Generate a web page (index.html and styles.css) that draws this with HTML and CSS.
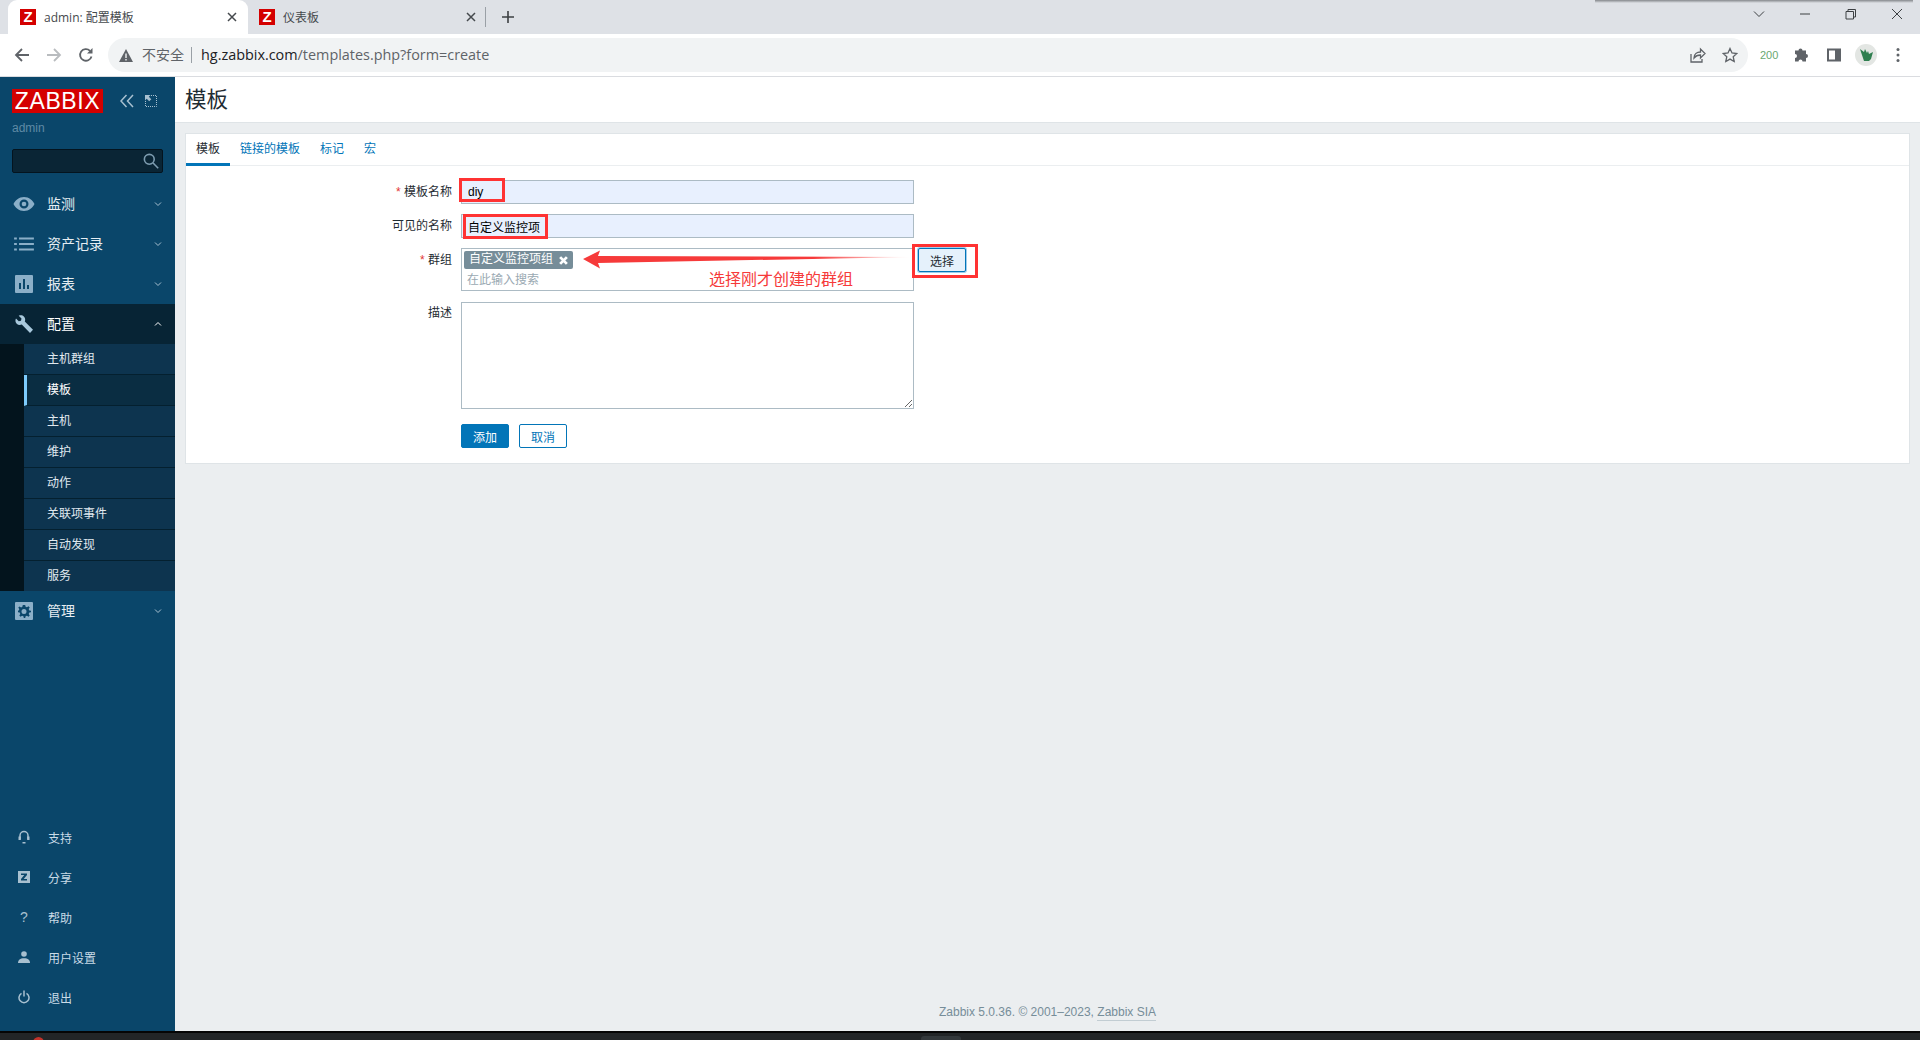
FILE: index.html
```html
<!DOCTYPE html>
<html lang="zh-CN">
<head>
<meta charset="utf-8">
<title>admin: 配置模板</title>
<link rel="stylesheet" href="styles.css">
</head>
<body>
<header class="chrome">
  <div class="tabstrip">
    <div class="tab tab-active">
      <span class="favicon">Z</span><span class="tab-title">admin: 配置模板</span>
      <svg class="tab-x" viewBox="0 0 10 10"><path d="M1 1l8 8M9 1l-8 8"/></svg>
    </div>
    <div class="tab">
      <span class="favicon">Z</span><span class="tab-title">仪表板</span>
      <svg class="tab-x" viewBox="0 0 10 10"><path d="M1 1l8 8M9 1l-8 8"/></svg>
    </div>
    <span class="tab-sep"></span>
    <svg class="tab-plus" viewBox="0 0 12 12"><path d="M6 0v12M0 6h12"/></svg>
    <div class="winctl">
      <svg viewBox="0 0 12 12" class="win"><path d="M1 3.500l5 5 5-5"/></svg>
      <svg viewBox="0 0 12 12" class="win"><path d="M1 6h10"/></svg>
      <svg viewBox="0 0 12 12" class="win"><path d="M1 3.500h7.500v7.500H1zM3 3.500V1.500h7.500V9H8.500"/></svg>
      <svg viewBox="0 0 12 12" class="win"><path d="M1 1l10 10M11 1L1 11"/></svg>
    </div>
  </div>
  <div class="toolbar">
    <svg class="nav-ic" viewBox="0 0 16 16"><path d="M15 8H2.500M8 2L2 8l6 6"/></svg>
    <svg class="nav-ic nav-off" viewBox="0 0 16 16"><path d="M1 8h12.500M8 2l6 6-6 6"/></svg>
    <svg class="nav-ic" viewBox="0 0 16 16"><path d="M13.500 9.500A5.800 5.800 0 1 1 12 3.800"/><path class="solid" d="M14.500 1v5.500H9z"/></svg>
    <div class="omnibox">
      <svg class="warn" viewBox="0 0 14 13"><path d="M7 0l7 13H0z"/><path class="warn-mark" d="M6.300 4.500h1.400v4.500H6.300zM6.300 10h1.400v1.400H6.300z"/></svg>
      <span class="insecure">不安全</span><span class="omni-sep"></span>
      <span class="url"><b>hg.zabbix.com</b>/templates.php?form=create</span>
      <svg class="omni-ic omni-share" viewBox="0 0 16 16"><path d="M1 7v8h11v-3M4 11c0-4 3-6 6.500-6V2L15 6.500 10.500 11V8C8 8 5.500 9 4 11z"/></svg>
      <svg class="omni-ic omni-star" viewBox="0 0 16 16"><path d="M8 1.500l2 4.500 4.800.5-3.600 3.200 1 4.800L8 12.100l-4.200 2.400 1-4.800L1.200 6.500 6 6z"/></svg>
    </div>
    <span class="ext-200">200</span>
    <svg class="tb-ic" viewBox="0 0 16 16"><path class="solid-g" d="M1 5h3.500a2 2 0 1 1 4 0H12v3.500a2 2 0 1 1 0 4V16H8.500a2 2 0 1 0-4 0H1v-3.500a2 2 0 1 0 0-4z" transform="translate(0 -1.500)"/></svg>
    <svg class="tb-ic" viewBox="0 0 16 16"><path class="solid-g" d="M1 1.500h14v13H1zM3 3.500v9h6v-9z" fill-rule="evenodd"/></svg>
    <span class="avatar"><svg viewBox="0 0 22 22"><path class="leaf" d="M5 5l4 3 1-3 2 4 1-2 1 3 4-2-2 7-2 2H9l-2-6z"/></svg></span>
    <svg class="tb-ic tb-dots" viewBox="0 0 16 16"><circle cx="8" cy="2.500" r="1.500"/><circle cx="8" cy="8" r="1.500"/><circle cx="8" cy="13.500" r="1.500"/></svg>
  </div>
</header>

<div class="app">
  <aside class="sidebar">
    <div class="brand">
      <span class="logo">ZABBIX</span>
      <svg class="brand-ic" viewBox="0 0 14 14"><path d="M6.500 1L1 7l5.500 6M13 1L7.500 7l5.500 6"/></svg>
      <svg class="brand-ic brand-ic2" viewBox="0 0 12 12"><path class="dotted" d="M.5 6v5.500h11V.5H6"/><path class="arrow" d="M0 0h5.500L3.800 1.700 6.300 4.200 4.200 6.300 1.700 3.800 0 5.500z"/></svg>
    </div>
    <div class="user">admin</div>
    <div class="search">
      <svg viewBox="0 0 14 14"><circle cx="5.500" cy="5.500" r="4.300"/><path d="M8.800 8.800L13.300 13.300"/></svg>
    </div>
    <nav class="menu">
      <a class="mi">
        <svg class="mi-ic" viewBox="0 0 22 16"><path class="fill" fill-rule="evenodd" d="M11 1C6 1 2 4.500 0.500 8 2 11.500 6 15 11 15s9-3.500 10.500-7C20 4.500 16 1 11 1zM11 3.500a4.500 4.500 0 1 1 0 9 4.500 4.500 0 0 1 0-9z"/><circle class="fill" cx="11" cy="8" r="2.300"/></svg>
        <span>监测</span><svg class="chev" viewBox="0 0 8 6"><path d="M1 1.500l3 3 3-3"/></svg>
      </a>
      <a class="mi">
        <svg class="mi-ic" viewBox="0 0 20 14"><path class="fill" d="M1 1h2.500v2H1zM5.500 1H19v2H5.500zM1 6h2.500v2H1zM5.500 6H19v2H5.500zM1 11h2.500v2H1zM5.500 11H19v2H5.500z"/></svg>
        <span>资产记录</span><svg class="chev" viewBox="0 0 8 6"><path d="M1 1.500l3 3 3-3"/></svg>
      </a>
      <a class="mi">
        <svg class="mi-ic" viewBox="0 0 18 18"><path class="fill" fill-rule="evenodd" d="M1 0h16a1 1 0 0 1 1 1v16a1 1 0 0 1-1 1H1a1 1 0 0 1-1-1V1a1 1 0 0 1 1-1zM4 8v6h2V8zM8 4v10h2V4zM12 10v4h2v-4z"/></svg>
        <span>报表</span><svg class="chev" viewBox="0 0 8 6"><path d="M1 1.500l3 3 3-3"/></svg>
      </a>
      <a class="mi mi-open">
        <svg class="mi-ic" viewBox="0 0 18 18"><path class="fill" d="M1 3.500L3.800 6.300 6 5.800l.5-2.200L3.700.8C5.500 0 7.800.3 9 1.700c1.300 1.400 1.500 3.200.8 4.800L18 14.700 15 18 6.800 9.500C5 10.300 3 10 1.700 8.700.3 7.300 0 5.300 1 3.500z"/></svg>
        <span>配置</span><svg class="chev" viewBox="0 0 8 6"><path d="M1 4.500l3-3 3 3"/></svg>
      </a>
      <ul class="submenu">
        <li>主机群组</li>
        <li class="sub-active">模板</li>
        <li>主机</li>
        <li>维护</li>
        <li>动作</li>
        <li>关联项事件</li>
        <li>自动发现</li>
        <li>服务</li>
      </ul>
      <a class="mi">
        <svg class="mi-ic" viewBox="0 0 18 18"><path class="fill" fill-rule="evenodd" d="M1 0h16a1 1 0 0 1 1 1v16a1 1 0 0 1-1 1H1a1 1 0 0 1-1-1V1a1 1 0 0 1 1-1zM7.800 3l-.4 1.800-1.300.6-1.600-1-1.200 1.200 1 1.600-.6 1.300L3 8.800v1.400l1.700.4.6 1.300-1 1.600 1.200 1.200 1.600-1 1.300.6.400 1.700h1.400l.4-1.700 1.300-.6 1.600 1 1.200-1.200-1-1.600.6-1.300 1.700-.4V8.800l-1.700-.4-.6-1.300 1-1.600-1.200-1.200-1.600 1-1.300-.6L10.200 3zM9 7a2.500 2.500 0 1 1 0 5 2.500 2.500 0 0 1 0-5z"/></svg>
        <span>管理</span><svg class="chev" viewBox="0 0 8 6"><path d="M1 1.500l3 3 3-3"/></svg>
      </a>
    </nav>
    <nav class="menu-bottom">
      <a class="bi"><svg viewBox="0 0 12 14"><path class="line" d="M2 9.500V5.500a4 4 0 0 1 8 0v4"/><path class="fill" d="M.5 6.500h2.300v3.500H.5zM9.200 6.500h2.300v3.500H9.200zM4.500 12h3v1.500h-3z"/></svg><span>支持</span></a>
      <a class="bi"><svg viewBox="0 0 12 12"><path class="fill" fill-rule="evenodd" d="M0 0h12v12H0zM3 2.500v1.500h3.300L3 8v1.500h6V8H5.700L9 4V2.500z"/></svg><span>分享</span></a>
      <a class="bi bi-q"><b>?</b><span>帮助</span></a>
      <a class="bi"><svg viewBox="0 0 12 12"><circle class="fill" cx="6" cy="3" r="2.800"/><path class="fill" d="M0 12c0-3 2-4.800 6-4.800S12 9 12 12z"/></svg><span>用户设置</span></a>
      <a class="bi"><svg viewBox="0 0 12 13"><path class="line" d="M3.500 2.800a5 5 0 1 0 5 0M6 0v6"/></svg><span>退出</span></a>
    </nav>
  </aside>

  <main class="content">
    <div class="page-head"><h1>模板</h1></div>
    <section class="card">
      <div class="tabs">
        <a class="t t-on">模板</a>
        <a class="t">链接的模板</a>
        <a class="t">标记</a>
        <a class="t">宏</a>
      </div>
      <form class="form">
        <label class="lb"><i>*</i> 模板名称</label>
        <input class="inp inp-fill" value="diy">
        <label class="lb">可见的名称</label>
        <input class="inp inp-fill" value="自定义监控项">
        <label class="lb"><i>*</i> 群组</label>
        <div class="msel">
          <span class="tag"><span class="tag-text">自定义监控项组</span><svg viewBox="0 0 8 8"><path d="M1 1l6 6M7 1L1 7"/></svg></span>
          <span class="ph">在此输入搜索</span>
          <button type="button" class="sel-btn">选择</button>
        </div>
        <label class="lb">描述</label>
        <textarea class="ta"></textarea>
        <span></span>
        <div class="btns">
          <button type="button" class="btn btn-main">添加</button>
          <button type="button" class="btn btn-alt">取消</button>
        </div>
      </form>
    </section>
    <footer class="foot">Zabbix 5.0.36. © 2001–2023, <a>Zabbix SIA</a></footer>
  </main>
</div>
<div class="taskbar"><span class="task-thumb"></span></div>

<span class="shadow-top"></span>
<span class="task-dot"></span>
<span class="rb rb1"></span>
<span class="rb rb2"></span>
<span class="rb rb3"></span>
<svg class="arrow-note" viewBox="0 0 330 20">
  <defs><linearGradient id="fade" x1="0" x2="1" y1="0" y2="0"><stop offset="0" stop-color="#f63a3a"/><stop offset=".7" stop-color="#f63a3a"/><stop offset="1" stop-color="#f63a3a" stop-opacity="0"/></linearGradient></defs>
  <path fill="url(#fade)" d="M0 10L17 1.500l-2 5.500 315 1-315 6 2 5.500z"/>
</svg>
<span class="note">选择刚才创建的群组</span>
</body>
</html>
```
FILE: styles.css
```css
* { box-sizing: border-box; }
html, body { margin: 0; padding: 0; }
body {
  width: 1920px; height: 1040px; overflow: hidden; position: relative;
  display: flex; flex-direction: column;
  font: 12px "Liberation Sans", "Noto Sans CJK SC", sans-serif;
  color: #1f2c33; background: #ebeef0;
}
a { text-decoration: none; }
svg { display: block; flex: none; }

/* browser chrome */
.chrome { flex: none; height: 77px; background: #fff; border-bottom: 1px solid #dadce0; }
.tabstrip { height: 34px; background: #dee1e6; display: flex; align-items: stretch; padding-left: 8px; }
.tab { width: 240px; margin-right: -1px; display: flex; align-items: center; padding: 0 11px 0 12px; color: #45494d; }
.tab-active { background: #fff; border-radius: 9px 9px 0 0; }
.favicon {
  width: 16px; height: 16px; background: #d40000; color: #fff; font: bold 15px/16px "Liberation Sans", sans-serif;
  text-align: center; flex: none;
}
.tab-title { margin-left: 8px; flex: 1; font: 12px "Open Sans", "Noto Sans CJK SC", sans-serif; }
.tab-x { width: 10px; height: 10px; fill: none; stroke: #45494d; stroke-width: 1.500; }
.tab-sep { width: 1px; height: 20px; background: #9aa0a6; margin: 7px 0 0 -1px; }
.tab-plus { width: 12px; height: 12px; margin: 11px 0 0 16px; fill: none; stroke: #3c4043; stroke-width: 1.600; }
.winctl { margin-left: auto; display: flex; padding-right: 17px; gap: 34px; padding-top: 8px; }
.win { width: 12px; height: 12px; fill: none; stroke: #3c4043; stroke-width: 1; }
.toolbar { height: 42px; display: flex; align-items: center; padding-left: 14px; }
.nav-ic { width: 16px; height: 16px; margin-right: 16px; fill: none; stroke: #5f6368; stroke-width: 1.800; }
.nav-off { stroke: #b9bcbf; }
.nav-ic .solid { fill: #5f6368; stroke: none; }
.omnibox {
  width: 1640px; height: 34px; border-radius: 17px; background: #f1f3f4;
  display: flex; align-items: center; padding-left: 11px; margin-left: -2px;
}
.warn { width: 14px; height: 13px; fill: #5f6368; }
.warn-mark { fill: #f1f3f4; }
.insecure { margin-left: 9px; font-size: 14px; line-height: 16px; color: #5f6368; width: 42px; white-space: nowrap; }
.omni-sep { width: 1px; height: 16px; background: #9aa0a6; margin: 0 9px 0 7px; }
.url { font: 14.400px/18px "Open Sans", "Noto Sans", sans-serif; color: #5f6368; white-space: nowrap; margin-top: -1px; }
.url b { font-weight: 400; color: #202124; }
.omni-ic { width: 16px; height: 16px; margin-right: 16px; fill: none; stroke: #5f6368; stroke-width: 1.300; }
.omni-share { margin-left: auto; }
.omni-star { margin-right: 10px; }
.ext-200 { width: 20px; margin: 0 14px 0 12px; font-size: 11px; color: #6aa86f; white-space: nowrap; }
.tb-ic { width: 16px; height: 16px; margin-right: 16px; }
.solid-g { fill: #5f6368; }
.avatar { width: 22px; height: 22px; border-radius: 50%; background: #e3e6e3; margin: 0 13px 0 -3px; flex: none; }
.leaf { fill: #2f7f4f; }
.tb-dots { fill: #5f6368; margin: 0; }

/* layout */
.app { flex: 1; display: flex; min-height: 0; }
.sidebar { width: 175px; flex: none; background: #0a466a; display: flex; flex-direction: column; }
.brand { display: flex; align-items: center; padding: 12px 0 0 12px; height: 36px; }
.logo {
  width: 91px; height: 24px; background: #d40000; color: #fff; text-align: center;
  font: 23px/24px "Liberation Sans", sans-serif; letter-spacing: .6px; flex: none;
}
.brand-ic { width: 14px; height: 14px; margin-left: 17px; fill: none; stroke: #a8c0d0; stroke-width: 1.500; }
.brand-ic2 { width: 12px; height: 12px; margin-left: 11px; }
.dotted { stroke-dasharray: 1 1; stroke-width: 1; }
.arrow { fill: #a8c0d0; stroke: none; }
.user { margin: 8px 0 0 12px; height: 14px; line-height: 14px; font-size: 12px; color: #5f8aa5; }
.search {
  margin: 14px 12px 0; height: 24px; background: #0a2535; border: 1px solid #04141f; border-radius: 2px;
  display: flex; align-items: center; justify-content: flex-end; padding-right: 3px;
}
.search svg { width: 16px; height: 16px; fill: none; stroke: #7d9cb0; stroke-width: 1.400; }
.menu { margin-top: 11px; }
.mi { height: 40px; display: flex; align-items: center; color: #e6edf2; font-size: 14px; line-height: 18px; position: relative; }
.mi > span { margin-left: 47px; }
.mi-ic { position: absolute; left: 13px; top: 11px; width: 22px; height: 18px; }
.fill { fill: #8bafc8; }
.chev { width: 8px; height: 6px; margin-left: auto; margin-right: 13px; fill: none; stroke: #a8c0d0; stroke-width: 1; }
.mi-open { background: #072435; color: #fff; }
.mi-open .fill { fill: #a8c8dc; }
.mi-open .chev { stroke: #fff; }
.submenu {
  list-style: none; margin: 0; padding: 0 0 0 24px; background: #03141d;
}
.submenu li {
  height: 31px; padding: 0 0 0 23px; line-height: 31px; background: #0d344f; color: #e0e9ef;
  font-size: 12px; border-bottom: 1px solid #04202f;
}
.submenu li:last-child { height: 30px; border-bottom: 0; }
.submenu .sub-active { background: #0a2d42; border-left: 3px solid #7dcbfc; padding-left: 20px; color: #fff; }
.menu-bottom { margin-top: auto; padding-bottom: 14px; }
.bi { height: 40px; display: flex; align-items: center; color: #c9dbe7; font-size: 12px; padding-left: 18px; }
.bi svg { width: 12px; height: 14px; }
.bi span { margin-left: 18px; }
.line { fill: none; stroke: #a8c0d0; stroke-width: 1.500; }
.bi .fill { fill: #a8c0d0; }
.bi-q b { width: 12px; text-align: center; font: 14px "Liberation Sans", sans-serif; color: #a8c0d0; }

/* content */
.content { flex: 1; min-width: 0; display: flex; flex-direction: column; background: #ebeef0; }
.page-head { height: 46px; background: #fff; border-bottom: 1px solid #dfe4e7; padding-left: 10px; flex: none; }
h1 { margin: 0; font-size: 21.500px; font-weight: 400; line-height: 46px; color: #1f2c33; }
.card { margin: 10px 10px 0 10px; background: #fff; border: 1px solid #dfe4e7; flex: none; }
.tabs { display: flex; height: 32px; border-bottom: 1px solid #ebeef0; }
.t { padding: 0 10px; line-height: 30px; color: #0275b8; font-size: 12px; height: 32px; }
.t-on { color: #1f2c33; border-bottom: 3px solid #0275b8; width: 44px; }
.form {
  display: grid; grid-template-columns: 266px 453px; column-gap: 9px; row-gap: 10px;
  padding: 14px 0 15px 0;
}
.lb { text-align: right; font-size: 12px; line-height: 24px; color: #1f2c33; }
.lb i { color: #e33734; font-style: normal; }
.inp { height: 24px; width: 453px; border: 1px solid #acbbc4; padding: 0 6px; font: 12px "Liberation Sans", "Noto Sans CJK SC", sans-serif; color: #000; outline: 0; }
.inp-fill { background: #e8f0fe; }
.msel { height: 43px; border: 1px solid #acbbc4; position: relative; padding: 2px 0 0 2px; }
.tag {
  display: flex; align-items: center; justify-content: space-between; width: 109px; height: 18px;
  background: #768d99; border-radius: 2px; color: #fff; padding: 0 5px; font-size: 12px;
}
.tag-text { line-height: 16px; margin-top: -2px; }
.tag svg { width: 9px; height: 9px; fill: none; stroke: #fff; stroke-width: 2.500; }
.ph { display: block; margin: 3px 0 0 3px; color: #9aa9b2; font-size: 12px; line-height: 16px; }
.sel-btn {
  position: absolute; left: 456px; top: -1px; width: 48px; height: 24px;
  background: #e5f1fb; border: 1px solid #0275b8; border-radius: 2px; box-shadow: 0 0 0 1px #9fcdec;
  font: 12px "Liberation Sans", "Noto Sans CJK SC", sans-serif; color: #1f2c33; padding: 0;
}
.ta { width: 453px; height: 107px; border: 1px solid #acbbc4; background: #fff; outline: 0; display: block; margin-top: 1px; }
.btns { display: flex; gap: 10px; margin-top: 5px; }
.btn { width: 48px; height: 24px; border-radius: 2px; font: 12px "Liberation Sans", "Noto Sans CJK SC", sans-serif; padding: 0; }
.btn-main { background: #0275b8; border: 1px solid #0275b8; color: #fff; }
.btn-alt { background: #fff; border: 1px solid #0275b8; color: #0275b8; }
.foot { margin-top: auto; height: 32px; text-align: center; color: #768d99; font-size: 12px; line-height: 14px; padding-top: 6px; }
.foot a { color: #768d99; border-bottom: 1px solid #c2cdd3; padding-bottom: 1px; }

/* desktop */
.taskbar { flex: none; height: 9px; background: #222527; border-top: 2px solid #050505; position: relative; }
.task-thumb { position: absolute; left: 921px; top: 3px; width: 40px; height: 6px; background: #33383b; border-radius: 3px 3px 0 0; }
.shadow-top { position: absolute; left: 1595px; top: 0; width: 318px; height: 3px; background: linear-gradient(#85888c, #dee1e6); }
.task-dot { position: absolute; left: 33px; top: 1037px; width: 11px; height: 11px; border-radius: 50%; background: #c2332b; }

/* annotations over the screenshot */
.rb { position: absolute; border: 3px solid #ff3333; }
.rb1 { left: 459px; top: 178px; width: 46px; height: 24px; }
.rb2 { left: 463px; top: 214px; width: 85px; height: 25px; }
.rb3 { left: 912px; top: 244px; width: 66px; height: 34px; }
.arrow-note { position: absolute; left: 583px; top: 249px; width: 330px; height: 20px; }
.note { position: absolute; left: 709px; top: 266px; font: 16px/24px "Noto Sans CJK SC", sans-serif; color: #f63a3a; }
```
